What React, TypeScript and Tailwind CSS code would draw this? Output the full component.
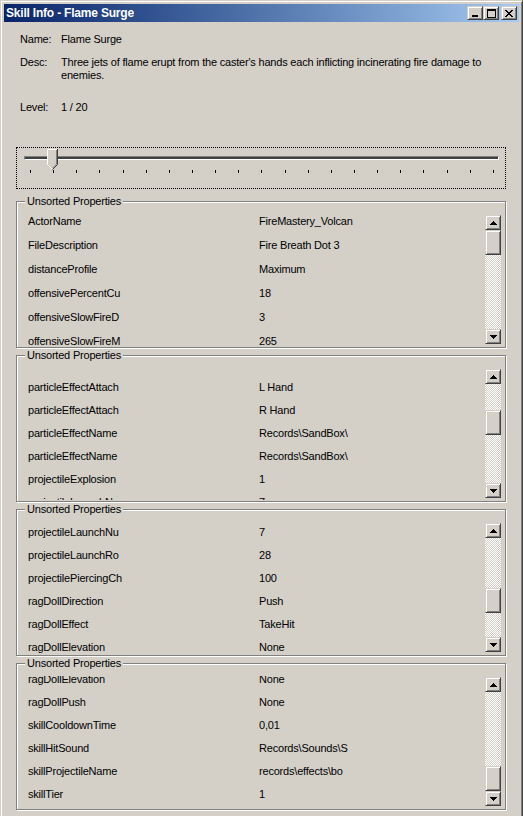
type Row = [string, string]

const raised =
  'border border-t-[#d4d0c8] border-l-[#d4d0c8] border-r-[#404040] border-b-[#404040] bg-[#d4d0c8] shadow-[inset_1px_1px_0_#fff,inset_-1px_-1px_0_#808080]'

const groups: { rowH: string; offset: string; thumb: string; rows: Row[] }[] = [
  {
    rowH: 'h-[24px]',
    offset: '-mt-[5px]',
    thumb: 'mt-0',
    rows: [
      ['ActorName', 'FireMastery_Volcan'],
      ['FileDescription', 'Fire Breath Dot 3'],
      ['distanceProfile', 'Maximum'],
      ['offensivePercentCu', '18'],
      ['offensiveSlowFireD', '3'],
      ['offensiveSlowFireM', '265'],
    ],
  },
  {
    rowH: 'h-[23px]',
    offset: 'mt-[8px]',
    thumb: 'mt-[26px]',
    rows: [
      ['particleEffectAttach', 'L Hand'],
      ['particleEffectAttach', 'R Hand'],
      ['particleEffectName', 'Records\\SandBox\\'],
      ['particleEffectName', 'Records\\SandBox\\'],
      ['projectileExplosion', '1'],
      ['projectileLaunchNu', '7'],
    ],
  },
  {
    rowH: 'h-[23px]',
    offset: '-mt-[1px]',
    thumb: 'mt-[50px]',
    rows: [
      ['projectileLaunchNu', '7'],
      ['projectileLaunchRo', '28'],
      ['projectilePiercingCh', '100'],
      ['ragDollDirection', 'Push'],
      ['ragDollEffect', 'TakeHit'],
      ['ragDollElevation', 'None'],
    ],
  },
  {
    rowH: 'h-[23px]',
    offset: '-mt-[8px]',
    thumb: 'mt-[74px]',
    rows: [
      ['ragDollElevation', 'None'],
      ['ragDollPush', 'None'],
      ['skillCooldownTime', '0,01'],
      ['skillHitSound', 'Records\\Sounds\\S'],
      ['skillProjectileName', 'records\\effects\\bo'],
      ['skillTier', '1'],
    ],
  },
]

// pixel triangle, 7 wide 4 tall
function Arrow({ down }: { down?: boolean }) {
  const rows = [
    [3, 1],
    [2, 3],
    [1, 5],
    [0, 7],
  ]
  return (
    <svg width="7" height="4" viewBox="0 0 7 4" shapeRendering="crispEdges" className={down ? 'rotate-180' : ''}>
      {rows.map(([x, w], y) => (
        <rect key={y} x={x} y={y} width={w} height={1} fill="#000" />
      ))}
    </svg>
  )
}

function ScrollBar({ thumb }: { thumb: string }) {
  return (
    <div className="mt-[13px] flex h-[129px] w-[16px] shrink-0 flex-col">
      <div className={`flex h-[15px] items-center justify-center ${raised}`}>
        <Arrow />
      </div>
      <div className="flex-1 [background-image:repeating-conic-gradient(#fff_0%_25%,#d4d0c8_0%_50%)] [background-size:2px_2px]">
        <div className={`${thumb} h-[25px] ${raised}`} />
      </div>
      <div className={`flex h-[15px] items-center justify-center ${raised}`}>
        <Arrow down />
      </div>
    </div>
  )
}

function PropertyGroup({ g, first }: { g: (typeof groups)[number]; first?: boolean }) {
  return (
    <div
      className={`relative ${first ? 'mt-[12px]' : 'mt-[7px]'} flex h-[147px] border border-[#808080] pr-[4px] shadow-[1px_1px_0_#fff,inset_1px_1px_0_#fff]`}
    >
      <span className="absolute -top-[7px] left-[8px] bg-[#d4d0c8] px-[2px] leading-[13px]">Unsorted Properties</span>
      <div className="mt-[12px] h-[132px] flex-1 overflow-hidden pl-[11px]">
        <div className={g.offset}>
          {g.rows.map(([k, v], i) => (
            <div key={i} className={`flex ${g.rowH} items-center`}>
              <span className="w-[231px] shrink-0">{k}</span>
              <span>{v}</span>
            </div>
          ))}
        </div>
      </div>
      <ScrollBar thumb={g.thumb} />
    </div>
  )
}

function TitleButton({ children, gap }: { children: React.ReactNode; gap?: boolean }) {
  return (
    <div className={`flex h-[14px] w-[16px] items-center justify-center ${gap ? 'ml-[2px]' : ''} ${raised}`}>
      {children}
    </div>
  )
}

const closeRows = ['11000011', '01100110', '00111100', '00011000', '00111100', '01100110', '11000011']

export default function App() {
  return (
    <div className="h-[816px] w-[523px] overflow-hidden bg-[#d4d0c8] font-['Liberation_Sans',Arial,sans-serif] text-[11px] tracking-[-0.2px] text-black">
      <div className="h-[840px] border border-t-[#d4d0c8] border-l-[#d4d0c8] border-r-[#404040] border-b-[#404040] p-[3px] shadow-[inset_1px_1px_0_#fff,inset_-1px_-1px_0_#808080]">
        {/* title bar */}
        <div className="flex h-[18px] items-center bg-linear-to-r from-[#0a246a] to-[#a6caf0] pr-[2px] pl-[2px]">
          <span className="flex-1 text-[12px] font-bold text-white">Skill Info - Flame Surge</span>
          <TitleButton>
            <svg width="8" height="7" viewBox="0 0 8 7" shapeRendering="crispEdges">
              <rect x="1" y="5" width="6" height="2" fill="#000" />
            </svg>
          </TitleButton>
          <TitleButton>
            <svg width="9" height="9" viewBox="0 0 9 9" shapeRendering="crispEdges">
              <rect x="0.5" y="0.5" width="8" height="8" fill="none" stroke="#000" />
              <rect x="0" y="1" width="9" height="1" fill="#000" />
            </svg>
          </TitleButton>
          <TitleButton gap>
            <svg width="8" height="7" viewBox="0 0 8 7" shapeRendering="crispEdges">
              {closeRows.map((r, y) =>
                r.split('').map((c, x) => (c === '1' ? <rect key={`${x}-${y}`} x={x} y={y} width={1} height={1} fill="#000" /> : null)),
              )}
            </svg>
          </TitleButton>
        </div>

        <div className="pr-[13px] pl-[12px]">
          {/* info */}
          <div className="ml-[4px] pt-[11px] leading-[13px]">
            <div className="flex">
              <span className="w-[41px]">Name:</span>
              <span>Flame Surge</span>
            </div>
            <div className="mt-[10px] flex">
              <span className="w-[41px] shrink-0">Desc:</span>
              <span>
                Three jets of flame erupt from the caster's hands each inflicting incinerating fire damage to
                <br />
                enemies.
              </span>
            </div>
            <div className="mt-[19px] flex">
              <span className="w-[41px]">Level:</span>
              <span>1 / 20</span>
            </div>
          </div>

          {/* slider */}
          <div className="relative mt-[33px] h-[42px] border border-dotted border-black">
            <div className="mt-[8px] mr-[6px] ml-[7px] h-[4px] border border-t-[#808080] border-l-[#808080] border-r-white border-b-white bg-[#404040]" />
            <div className="mt-[10px] ml-[13px] flex w-[464px] justify-between">
              {Array.from({ length: 21 }).map((_, i) => (
                <div key={i} className="h-[3px] w-px bg-black" />
              ))}
            </div>
            <svg className="absolute top-[1px] left-[30px]" width="11" height="21" viewBox="0 0 11 21">
              <polygon points="0,0 11,0 11,15.5 5.5,21 0,15.5" fill="#d4d0c8" />
              <polyline points="0.5,15.5 0.5,0.5 10,0.5" fill="none" stroke="#fff" />
              <polyline points="0.5,15.5 5.5,20.5" fill="none" stroke="#fff" />
              <polyline points="10.5,0 10.5,15.5 5.5,20.5" fill="none" stroke="#404040" />
              <polyline points="9.5,1 9.5,15 5.5,19" fill="none" stroke="#808080" />
            </svg>
          </div>

          {groups.map((g, i) => (
            <PropertyGroup key={i} g={g} first={i === 0} />
          ))}
        </div>
      </div>
    </div>
  )
}
